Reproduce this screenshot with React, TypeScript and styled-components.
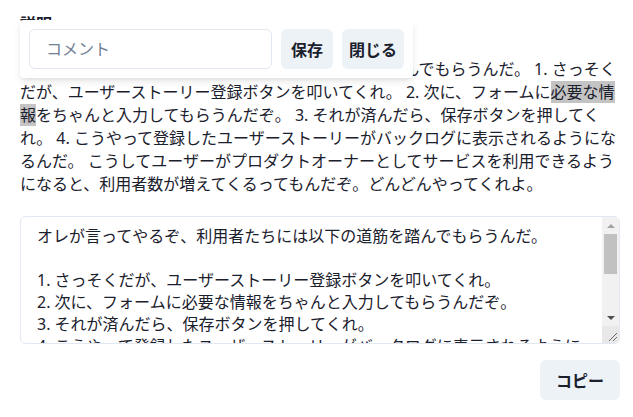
import styled, { createGlobalStyle } from "styled-components"

const GlobalStyle = createGlobalStyle`
  body {
    margin: 0;
    background: #ffffff;
    color: #1a202c;
    font-family: "Noto Sans", "Noto Sans CJK JP", sans-serif;
  }
`

const description =
  "オレが言ってやるぞ、利用者たちには以下の道筋を踏んでもらうんだ。\n\n" +
  "1. さっそくだが、ユーザーストーリー登録ボタンを叩いてくれ。\n" +
  "2. 次に、フォームに必要な情報をちゃんと入力してもらうんだぞ。\n" +
  "3. それが済んだら、保存ボタンを押してくれ。\n" +
  "4. こうやって登録したユーザーストーリーがバックログに表示されるようになるんだ。\n\n" +
  "こうしてユーザーがプロダクトオーナーとしてサービスを利用できるようになると、利用者数が増えてくるってもんだぞ。どんどんやってくれよ。"

const App = () => {
  return (
    <Page>
      <GlobalStyle />
      <Heading>説明</Heading>
      <Body>
        オレが言ってやるぞ、利用者たちには以下の道筋を踏んでもらうんだ。 1. さっそくだが、ユーザーストーリー登録ボタンを叩いてくれ。 2. 次に、フォームに
        <Selected>必要な情報</Selected>
        をちゃんと入力してもらうんだぞ。 3. それが済んだら、保存ボタンを押してくれ。 4. こうやって登録したユーザーストーリーがバックログに表示されるようになるんだ。 こうしてユーザーがプロダクトオーナーとしてサービスを利用できるようになると、利用者数が増えてくるってもんだぞ。どんどんやってくれよ。
      </Body>
      <Field>
        <Editor defaultValue={description} />
        {/* the browser hides native scrollbars in the capture, so draw one */}
        <ScrollBar aria-hidden>
          <Arrow $dir="up" />
          <Track>
            <Thumb />
          </Track>
          <Arrow $dir="down" />
          <Resizer>
            <svg width="17" height="17" viewBox="0 0 17 17">
              <path d="M15 7 L7 15 M15 11 L11 15" stroke="#6b6b6b" strokeWidth="1" fill="none" />
            </svg>
          </Resizer>
        </ScrollBar>
      </Field>
      <Actions>
        <Button>コピー</Button>
      </Actions>
      <CommentPopover>
        <CommentInput placeholder="コメント" />
        <Button $px={10}>保存</Button>
        <Button $px={7}>閉じる</Button>
      </CommentPopover>
    </Page>
  )
}

export default App

const Page = styled.div`
  position: relative;
  width: 600px;
  padding: 12px 20px 20px;
`

const Heading = styled.h2`
  margin: 0 0 22px;
  font-size: 16px;
  font-weight: 700;
  line-height: 24px;
`

const Body = styled.p`
  margin: 0 0 20px;
  font-size: 16px;
  line-height: 23px;
`

const Selected = styled.span`
  background: #c4c4c4;
`

const Field = styled.div`
  position: relative;
`

const Editor = styled.textarea`
  display: block;
  box-sizing: border-box;
  width: 100%;
  height: 128px;
  padding: 8px 33px 8px 16px;
  border: 1px solid #e2e8f0;
  border-radius: 6px;
  color: #1a202c;
  font-family: inherit;
  font-size: 16px;
  line-height: 22px;
  outline: none;
  resize: none;
  overflow: hidden;
`

const ScrollBar = styled.div`
  position: absolute;
  top: 1px;
  right: 1px;
  bottom: 1px;
  width: 17px;
  display: flex;
  flex-direction: column;
  background: #f1f1f1;
  border-top-right-radius: 5px;
`

const Arrow = styled.div<{ $dir: "up" | "down" }>`
  height: 17px;
  display: flex;
  align-items: center;
  justify-content: center;

  &::before {
    content: "";
    width: 0;
    height: 0;
    border-left: 4px solid transparent;
    border-right: 4px solid transparent;
    ${(p) =>
      p.$dir === "up"
        ? "border-bottom: 4px solid #a3a3a3;"
        : "border-top: 4px solid #505050;"}
  }
`

const Track = styled.div`
  flex: 1;
  padding: 0 2px;
`

const Thumb = styled.div`
  height: 40px;
  background: #c1c1c1;
`

const Resizer = styled.div`
  height: 17px;
  background: #e8e8e8;
  border-bottom-right-radius: 5px;

  svg {
    display: block;
  }
`

const Actions = styled.div`
  display: flex;
  justify-content: flex-end;
  margin-top: 16px;
`

const Button = styled.button<{ $px?: number }>`
  height: 40px;
  padding: 0 ${(p) => p.$px ?? 16}px;
  border: none;
  border-radius: 6px;
  background: #edf2f7;
  color: #1a202c;
  font-family: inherit;
  font-size: 16px;
  font-weight: 700;
  cursor: pointer;
`

const CommentPopover = styled.div`
  position: absolute;
  top: 20px;
  left: 20px;
  display: flex;
  align-items: center;
  gap: 9px;
  padding: 9px;
  background: #ffffff;
  border-radius: 4px;
  box-shadow: 0 4px 8px -1px rgba(0, 0, 0, 0.1), 0 2px 4px -1px rgba(0, 0, 0, 0.06);
`

const CommentInput = styled.input`
  box-sizing: border-box;
  width: 243px;
  height: 40px;
  padding: 0 16px;
  border: 1px solid #e2e8f0;
  border-radius: 6px;
  color: #1a202c;
  font-family: inherit;
  font-size: 16px;
  outline: none;

  &::placeholder {
    color: #718096;
  }
`
